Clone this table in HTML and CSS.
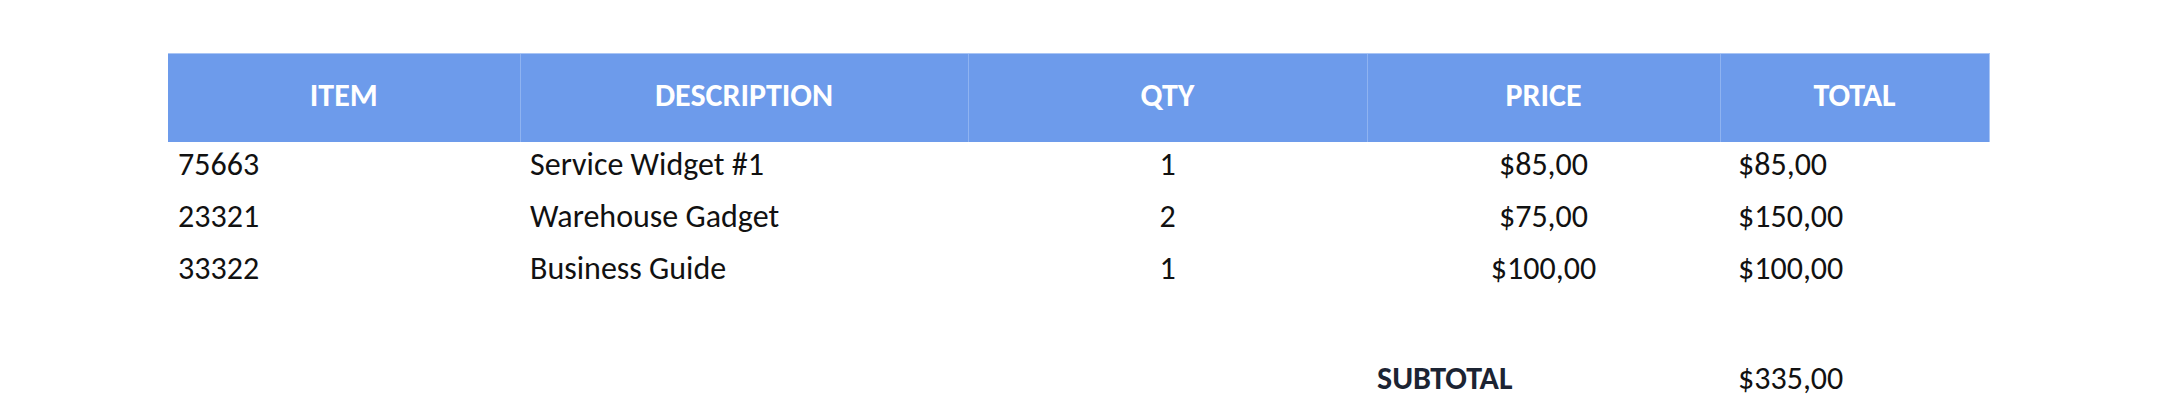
FILE: index.html
```html
<!DOCTYPE html>
<html>
<head>
<meta charset="utf-8">
<link rel="stylesheet" href="styles.css">
</head>
<body>
<table class="invoice">
  <colgroup>
    <col class="c-item"><col class="c-desc"><col class="c-qty"><col class="c-price"><col class="c-total">
  </colgroup>
  <thead>
    <tr>
      <th>ITEM</th><th>DESCRIPTION</th><th>QTY</th><th>PRICE</th><th>TOTAL</th>
    </tr>
  </thead>
  <tbody>
    <tr><td class="left">75663</td><td class="left">Service Widget #1</td><td class="center">1</td><td class="center">$85,00</td><td class="money">$85,00</td></tr>
    <tr><td class="left">23321</td><td class="left">Warehouse Gadget</td><td class="center">2</td><td class="center">$75,00</td><td class="money">$150,00</td></tr>
    <tr><td class="left">33322</td><td class="left">Business Guide</td><td class="center">1</td><td class="center">$100,00</td><td class="money">$100,00</td></tr>
    <tr class="spacer"><td colspan="5"></td></tr>
    <tr class="subtotal"><td></td><td></td><td></td><td class="label">SUBTOTAL</td><td class="money">$335,00</td></tr>
  </tbody>
</table>
</body>
</html>
```
FILE: styles.css
```css
html, body {
  margin: 0;
  padding: 0;
  background: #ffffff;
}
body {
  padding: 53px 0 0 168px;
  font-family: Carlito, Lato, "Liberation Sans", sans-serif;
  font-size: 32px;
  color: #111111;
}
.invoice {
  border-collapse: collapse;
  table-layout: fixed;
  width: 1821px;
}
.c-item { width: 352px; }
.c-desc { width: 448px; }
.c-qty { width: 399px; }
.c-price { width: 353px; }
.c-total { width: 269px; }

.invoice th {
  height: 88px;
  padding: 0 0 5px 0;
  box-sizing: border-box;
  background: #6d9beb;
  color: #ffffff;
  font-weight: 700;
  text-align: center;
  border-top: 1px solid #a9c5f5;
  border-left: 1px solid #8fb3f1;
}
.invoice th:first-child { border-left: none; }
.invoice th:last-child { border-right: 1px solid #a9c5f5; }

.invoice td {
  height: 46px;
  padding: 0 0 6px 0;
  line-height: 46px;
  white-space: nowrap;
}
.invoice td.left { padding-left: 10px; }
.invoice td.center { text-align: center; }
.invoice td.money { padding-left: 18px; }
.invoice .spacer td { height: 58px; padding: 0; }
.invoice .subtotal td.label {
  padding-left: 10px;
  font-weight: 700;
  color: #1c2433;
}
```
